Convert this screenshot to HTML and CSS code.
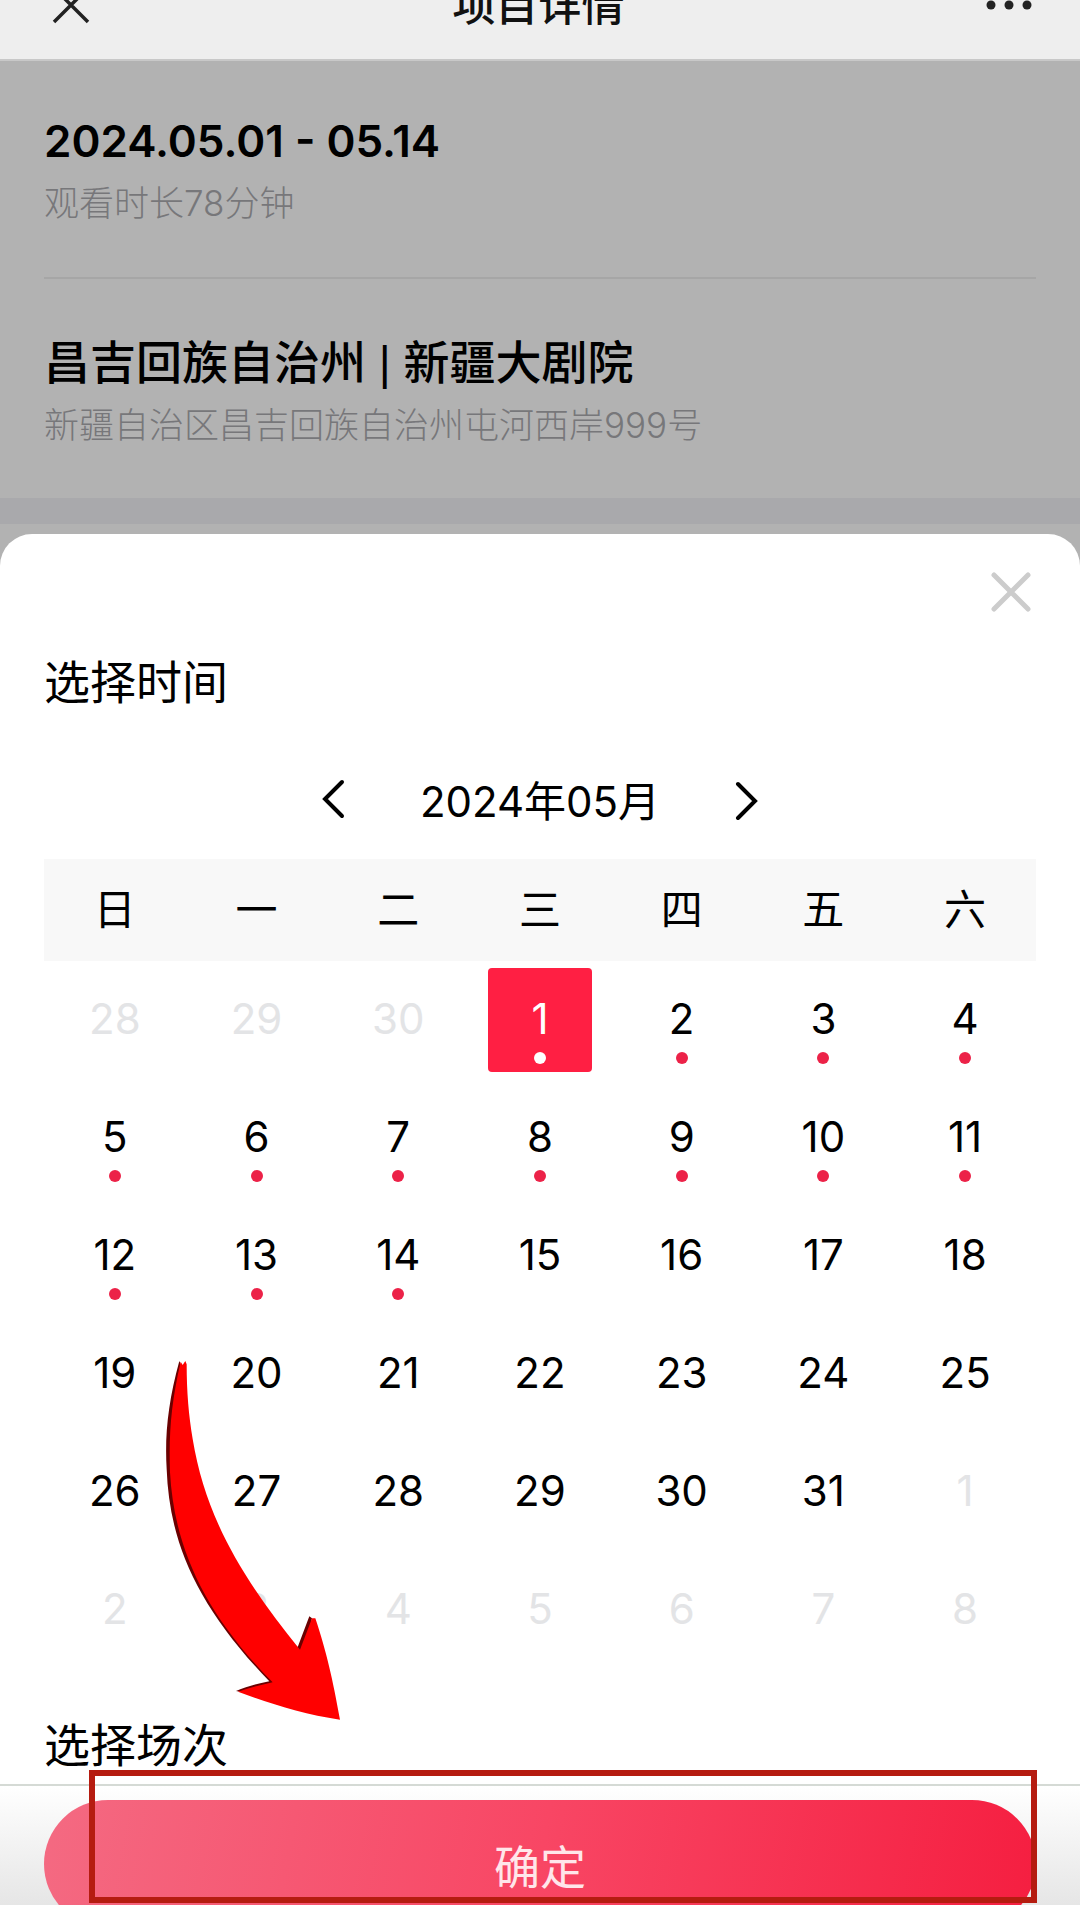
FILE: index.html
```html
<!DOCTYPE html>
<html lang="zh-CN">
<head>
    <meta charset="UTF-8">
    <meta name="viewport" content="width=device-width, initial-scale=1">
    <title>项目详情</title>
    <link rel="stylesheet" href="styles.css">
</head>
<body>
<div class="page">
    <header class="navbar">
        <button class="icon-btn" type="button" aria-label="关闭页面">
            <svg width="40" height="40" viewBox="0 0 40 40"><path d="M3 3L37 37M37 3L3 37" stroke="#222" stroke-width="3.5"/></svg>
        </button>
        <h1>项目详情</h1>
        <button class="icon-btn" type="button" aria-label="更多">
            <svg width="46" height="40" viewBox="0 0 46 40" fill="#222"><circle cx="5" cy="20" r="4.5"/><circle cx="23" cy="20" r="4.5"/><circle cx="41" cy="20" r="4.5"/></svg>
        </button>
    </header>

    <main class="detail">
        <section class="info">
            <h2 class="date">2024.05.01 - 05.14</h2>
            <p>观看时长78分钟</p>
        </section>
        <section class="info">
            <h2 class="venue">昌吉回族自治州 | 新疆大剧院</h2>
            <p>新疆自治区昌吉回族自治州屯河西岸999号</p>
        </section>
    </main>
    <div class="band"></div>

    <div class="sheet">
        <div class="sheet-top">
            <button class="icon-btn" type="button" aria-label="关闭">
                <svg width="40" height="40" viewBox="0 0 40 40"><path d="M3 3L37 37M37 3L3 37" stroke="#ccc" stroke-width="5" stroke-linecap="round"/></svg>
            </button>
        </div>
        <h2 class="title">选择时间</h2>
        <div class="month">
            <button class="icon-btn" type="button" aria-label="上个月">
                <svg width="24" height="44" viewBox="0 0 24 44" fill="none"><path d="M21 6L4 23L21 40" stroke="#000" stroke-width="4" stroke-linecap="round"/></svg>
            </button>
            <span>2024年05月</span>
            <button class="icon-btn" type="button" aria-label="下个月">
                <svg width="24" height="44" viewBox="0 0 24 44" fill="none"><path d="M3 8L20 25L3 42" stroke="#000" stroke-width="4" stroke-linecap="round"/></svg>
            </button>
        </div>
        <div class="calendar">
            <table>
                <thead>
                <tr><th>日</th><th>一</th><th>二</th><th>三</th><th>四</th><th>五</th><th>六</th></tr>
                </thead>
                <tbody id="days"></tbody>
            </table>
            <svg class="arrow" viewBox="0 0 720 1200" aria-hidden="true">
                <path fill="#6b0000" d="M118 66C84 190 74 290 80 390C88 610 170 800 388 1027C350 1034 320 1043 288 1056L320 1062L480 1000L516 838L508 832L474 922L440 960L270 740L110 400L124 80Z"/>
                <path fill="#f00" d="M122 68L128 78L136 66L140 76C140 160 146 230 158 300C196 530 300 710 480 932L516 838L526 838C560 940 578 1020 600 1142C490 1126 390 1094 294 1058C330 1046 362 1038 398 1030C190 820 102 620 90 400C86 280 94 190 122 68Z"/>
            </svg>
        </div>
        <h2 class="title session">选择场次</h2>
        <div class="footer">
            <button class="confirm" type="button">确定</button>
            <div class="highlight"></div>
        </div>
    </div>
</div>
<script>
    window.onload = function () {
        var oDays = document.getElementById('days');
        // 2024-05-01 is a Wednesday, the grid starts on 04-28
        for (var row = 0; row < 6; row++) {
            var tr = document.createElement('tr');
            for (var col = 0; col < 7; col++) {
                var n = row * 7 + col - 2;
                var td = document.createElement('td');
                var btn = document.createElement('button');
                btn.type = 'button';
                btn.className = 'day';
                if (n < 1) {
                    btn.textContent = n + 30;
                    btn.disabled = true;
                } else if (n > 31) {
                    btn.textContent = n - 31;
                    btn.disabled = true;
                } else {
                    btn.textContent = n;
                    if (n <= 14) btn.className += ' has-show';
                    if (n == 1) btn.className += ' active';
                }
                td.appendChild(btn);
                tr.appendChild(td);
            }
            oDays.appendChild(tr);
        }
    }
</script>
</body>
</html>
```
FILE: styles.css
```css
* {
    box-sizing: border-box;
}

body {
    margin: 0;
    background-color: #b2b2b2;
    color: #000;
    font-family: Inter, "Noto Sans CJK SC", sans-serif;
}

h1, h2, p {
    margin: 0;
}

button {
    padding: 0;
    border: 0;
    background: none;
    font-family: inherit;
    color: inherit;
    cursor: pointer;
}

.page {
    height: 100vh;
    overflow: hidden;
}

.icon-btn {
    display: flex;
}

/* the bar is scrolled half out of view */
.navbar {
    display: flex;
    align-items: center;
    justify-content: space-between;
    height: 110px;
    margin-top: -49px;
    padding: 0 48px 0 51px;
    background-color: #eee;
    border-bottom: 2px solid #c8c8c8;
}

.navbar h1 {
    font-size: 43px;
    line-height: 60px;
    font-weight: 500;
    color: #111;
}

.detail {
    padding: 0 44px;
}

.info {
    height: 216px;
    padding-top: 50px;
}

.info + .info {
    height: 221px;
    padding-top: 54px;
    border-top: 2px solid #a6a6a6;
}

.info h2 {
    font-size: 46px;
    line-height: 60px;
    font-weight: 500;
}

.info .date {
    font-size: 44px;
    font-weight: 600;
}

/* narrower divider between the city and the theatre */
.info .venue {
    font-family: "Liberation Sans", "Noto Sans CJK SC", sans-serif;
}

.info p {
    padding-top: 2px;
    font-size: 35px;
    line-height: 60px;
    font-weight: 300;
    color: #77777a;
}

.band {
    height: 26px;
    background-color: #a9a9ac;
}

.sheet {
    margin-top: 10px;
    background-color: #fff;
    border-radius: 32px 32px 0 0;
}

.sheet-top {
    display: flex;
    justify-content: flex-end;
    padding: 38px 49px 0;
}

.title {
    padding: 0 44px;
    margin-top: 40px;
    font-size: 46px;
    line-height: 60px;
    font-weight: 400;
}

.month {
    display: flex;
    align-items: center;
    justify-content: center;
    gap: 75px;
    height: 60px;
    margin-top: 56px;
    font-size: 42px;
}

.calendar {
    position: relative;
    margin-top: 31px;
    padding: 0 44px;
}

table {
    width: 100%;
    table-layout: fixed;
    border-collapse: collapse;
}

th {
    height: 102px;
    padding: 0 0 8px;
    background-color: #f8f8f8;
    font-size: 42px;
    font-weight: 400;
}

td {
    height: 118px;
    padding: 0;
    text-align: center;
}

.day {
    position: relative;
    width: 104px;
    height: 104px;
    padding-bottom: 4px;
    border-radius: 4px;
    font-size: 42px;
}

.day:disabled {
    color: #e3e4e6;
}

.has-show::after {
    content: "";
    position: absolute;
    left: 46px;
    bottom: 8px;
    width: 12px;
    height: 12px;
    border-radius: 50%;
    background-color: #ec2248;
}

.active {
    background-color: #ff1f43;
    color: #fff;
}

.active::after {
    background-color: #fff;
}

.arrow {
    position: absolute;
    left: 140px;
    bottom: -70px;
    width: 240px;
    height: 400px;
}

.session {
    margin-top: 46px;
}

.footer {
    position: relative;
    margin-top: 9px;
    padding: 14px 44px;
    border-top: 2px solid #d5dad5;
    background-image: linear-gradient(#fff, #dedede);
}

.confirm {
    display: block;
    width: 100%;
    height: 128px;
    border-radius: 64px;
    background-image: linear-gradient(100deg, #f46a82, #f84664 50%, #f51e40);
    font-size: 46px;
    color: #ffe6ea;
}

.highlight {
    position: absolute;
    top: -16px;
    left: 89px;
    right: 43px;
    height: 133px;
    border: 6px solid #b51c10;
}
```
